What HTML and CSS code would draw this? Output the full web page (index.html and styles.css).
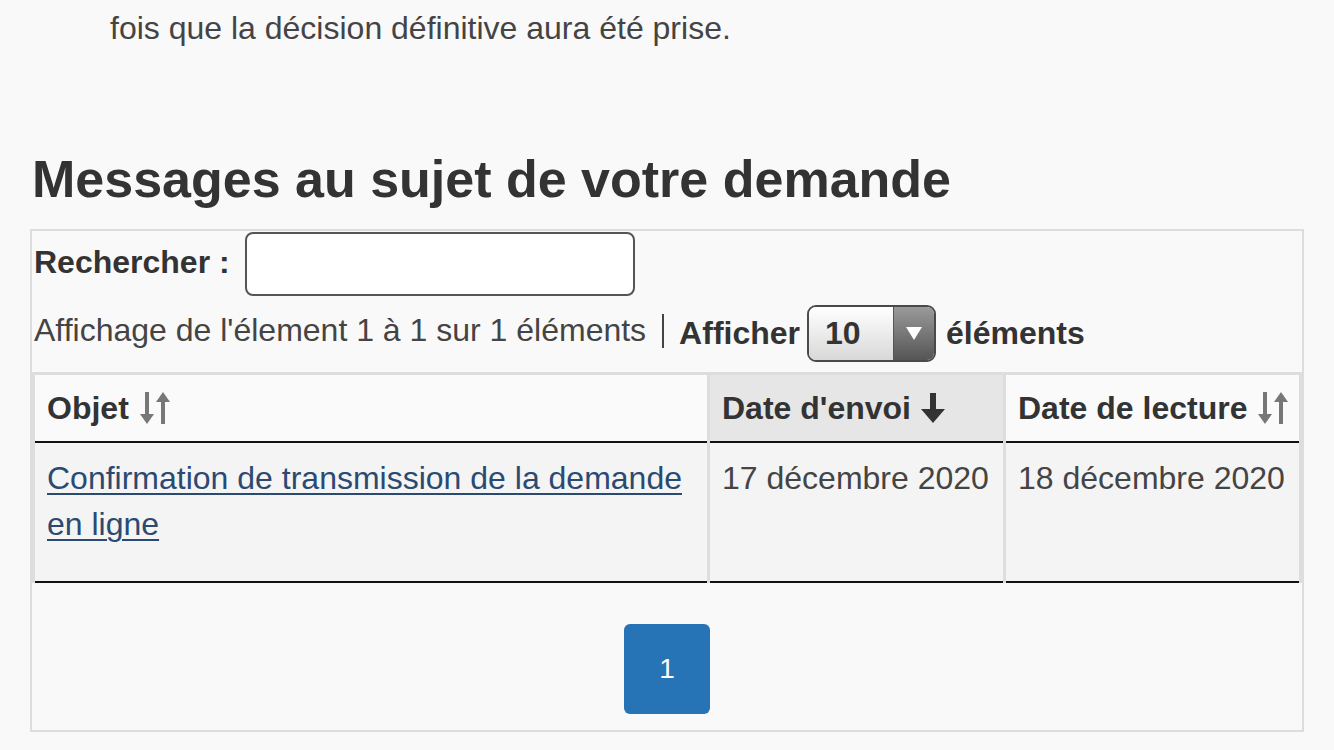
FILE: index.html
```html
<!DOCTYPE html>
<html lang="fr">
<head>
<meta charset="utf-8">
<title>Messages au sujet de votre demande</title>
<link rel="stylesheet" href="styles.css">
</head>
<body>
<p class="intro">fois que la décision définitive aura été prise.</p>

<h2 class="title">Messages au sujet de votre demande</h2>

<div class="box">
  <div class="search-row">
    <label class="search-label" for="q">Rechercher :</label>
    <input class="search-input" id="q" type="text">
  </div>
  <div class="info-row">
    <span class="info-text">Affichage de l'élement 1 à 1 sur 1 éléments</span>
    <span class="sep"></span>
    <span class="strong">Afficher</span>
    <span class="select">
      <span class="select-value">10</span>
      <span class="select-btn">
        <svg width="16" height="13" viewBox="0 0 16 13"><polygon points="0,0 16,0 8,13" fill="#fff"/></svg>
      </span>
    </span>
    <span class="strong">éléments</span>
  </div>

  <table class="grid">
    <colgroup>
      <col class="c1"><col class="c2"><col class="c3">
    </colgroup>
    <thead>
      <tr>
        <th><span class="th-in">Objet <svg class="sort" width="32" height="32" viewBox="0 0 32 32"><rect x="6" y="0" width="4" height="23" fill="#777"/><polygon points="1,22 15,22 8,32" fill="#777"/><rect x="22" y="9" width="4" height="23" fill="#777"/><polygon points="17,10 31,10 24,0" fill="#777"/></svg></span></th>
        <th class="sorted"><span class="th-in">Date d'envoi <svg class="sort" width="24" height="30" viewBox="0 0 24 30"><rect x="9" y="0" width="6" height="19" fill="#333"/><polygon points="0,16 24,16 12,30" fill="#333"/></svg></span></th>
        <th><span class="th-in">Date de lecture <svg class="sort" width="32" height="32" viewBox="0 0 32 32"><rect x="6" y="0" width="4" height="23" fill="#777"/><polygon points="1,22 15,22 8,32" fill="#777"/><rect x="22" y="9" width="4" height="23" fill="#777"/><polygon points="17,10 31,10 24,0" fill="#777"/></svg></span></th>
      </tr>
    </thead>
    <tbody>
      <tr>
        <td><a href="#" class="link">Confirmation de transmission de la demande en ligne</a></td>
        <td class="nowrap">17 décembre 2020</td>
        <td class="nowrap">18 décembre 2020</td>
      </tr>
    </tbody>
  </table>

  <div class="pager">
    <a href="#" class="page-btn">1</a>
  </div>
</div>
</body>
</html>
```

FILE: styles.css
```css
html, body {
  margin: 0;
  padding: 0;
  background: #f9f9f9;
}
body {
  font-family: "Liberation Sans", Arial, sans-serif;
  color: #333;
  font-size: 32px;
}
.intro {
  margin: 0;
  padding: 10px 0 0 110px;
  font-size: 32px;
  line-height: 37px;
  color: #444;
}
.title {
  margin: 102px 0 20px 32px;
  font-size: 52px;
  line-height: 60px;
  font-weight: bold;
  color: #333;
}
.box {
  margin: 0 30px;
  border: 2px solid #ddd;
  padding: 0;
}
.search-row {
  display: flex;
  align-items: center;
  margin-top: 1px;
  padding-left: 2px;
  height: 64px;
}
.search-label {
  font-weight: bold;
  font-size: 32px;
  margin-right: 15px;
  position: relative;
  top: -2px;
}
.search-input {
  box-sizing: border-box;
  width: 390px;
  height: 64px;
  border: 2px solid #555;
  border-radius: 8px;
  background: #fff;
  margin: 0;
  padding: 0 10px;
  font-size: 28px;
  font-family: inherit;
}
.info-row {
  display: flex;
  align-items: center;
  padding-left: 2px;
  margin-top: 9px;
  height: 57px;
  margin-bottom: 10px;
}
.info-text {
  color: #444;
  position: relative;
  top: -3px;
}
.sep {
  display: inline-block;
  width: 2px;
  height: 34px;
  background: #444;
  margin: 0 15px 0 16px;
  position: relative;
  top: -3px;
}
.strong {
  font-weight: bold;
}
.select {
  box-sizing: border-box;
  display: flex;
  width: 129px;
  height: 57px;
  border: 2px solid #4a4a4a;
  border-radius: 9px;
  overflow: hidden;
  margin: 0 10px 0 7px;
}
.select-value {
  flex: 1;
  display: flex;
  align-items: center;
  padding-left: 16px;
  font-weight: bold;
  background: linear-gradient(#ffffff, #d8d8d8);
  border-right: 1px solid #555;
}
.select-btn {
  width: 40px;
  display: flex;
  align-items: center;
  justify-content: center;
  background: linear-gradient(#9a9a9a, #555);
}
.grid {
  width: 100%;
  table-layout: fixed;
  border-collapse: collapse;
  border-top: 3px solid #ddd;
  border-right: 4px solid #ddd;
}
.c1 { width: 675px; }
.c2 { width: 296px; }
.c3 { width: 296px; }
.grid th, .grid td {
  border-left: 3px solid #ddd;
  padding: 0 12px;
  text-align: left;
  overflow: visible;
}
.grid th {
  height: 66px;
  background: #fafafa;
  font-weight: bold;
  white-space: nowrap;
  vertical-align: middle;
  border-bottom: 2px solid #111;
}
.grid th.sorted {
  background: #e6e6e6;
}
.th-in {
  display: inline-flex;
  align-items: center;
  gap: 10px;
}
.grid td {
  background: #f4f4f4;
  vertical-align: top;
  padding-top: 12px;
  padding-bottom: 34px;
  line-height: 46px;
  border-bottom: 2px solid #111;
  color: #444;
}
.nowrap {
  white-space: nowrap;
}
.link {
  color: #2a4a72;
  text-decoration: underline;
  text-underline-offset: 4px;
  text-decoration-thickness: 2px;
}
.pager {
  display: flex;
  justify-content: center;
  padding: 41px 0 16px;
}
.page-btn {
  width: 86px;
  height: 90px;
  display: flex;
  align-items: center;
  justify-content: center;
  background: #2673b5;
  color: #fff;
  border-radius: 6px;
  text-decoration: none;
  font-size: 28px;
}
```
